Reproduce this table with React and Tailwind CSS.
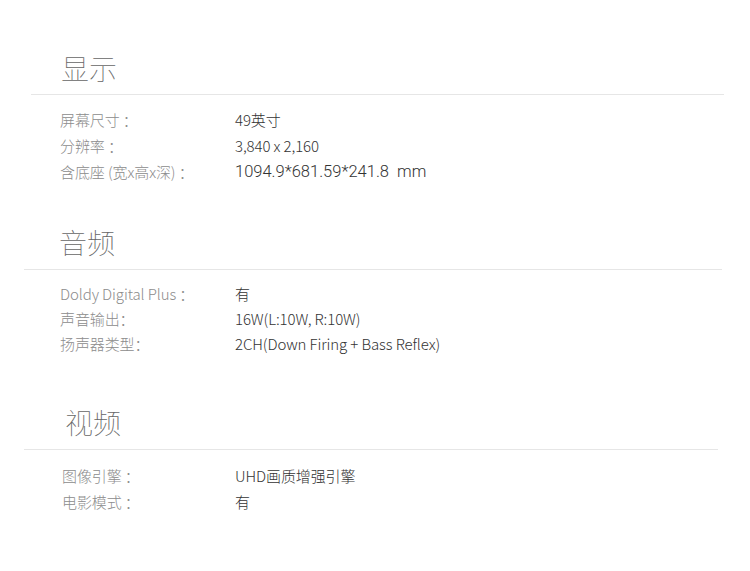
export default function App() {
  const cjk = { fontFamily: '"Noto Sans CJK SC", "Noto Sans", sans-serif' };
  const Row = ({ label, value, h, valueClass = "", labelClass = "w-[175px]" }) => (
    <div className={`flex items-center ${h}`}>
      <div className={`shrink-0 whitespace-pre text-[15px] font-light text-[#8c8c8c] tracking-[-0.1px] ${labelClass}`}>{label}</div>
      <div className={`whitespace-pre text-[15px] font-light text-[#333] tracking-[-0.1px] ${valueClass}`}>{value}</div>
    </div>
  );
  const heading = "h-[40px] text-[28px] leading-[40px] font-thin text-[#666]";
  return (
    <div className="w-[750px] h-[571px] bg-white overflow-hidden" style={cjk}>
      {/* 显示 */}
      <div className={`mt-[48px] pl-[61px] ${heading}`}>显示</div>
      <div className="mt-[6px] ml-[31px] w-[693px] h-px bg-[#e6e6e6]" />
      <div className="mt-[12px] pl-[60px]">
        <Row h="h-[26px]" label="屏幕尺寸 ：" value="49英寸" />
        <Row h="h-[26px]" label="分辨率 ：" value="3,840 x 2,160" />
        <Row
          h="h-[26px]"
          label="含底座 (宽x高x深) ："
          value="1094.9*681.59*241.8  mm"
          valueClass="text-[16.5px] font-light tracking-[0px] text-[#222] [font-family:Roboto,'Liberation_Sans',Arial,sans-serif]"
        />
      </div>

      {/* 音频 */}
      <div className={`mt-[37px] pl-[59px] ${heading}`}>音频</div>
      <div className="mt-[7px] ml-[24px] w-[698px] h-px bg-[#e6e6e6]" />
      <div className="mt-[12px] pl-[60px]">
        <Row h="h-[25px]" label="Doldy Digital Plus ：" value="有" />
        <Row h="h-[25px]" label="声音输出：" value="16W(L:10W, R:10W)" />
        <Row h="h-[25px]" label="扬声器类型：" value="2CH(Down Firing + Bass Reflex)" />
      </div>

      {/* 视频 */}
      <div className={`mt-[45px] pl-[65px] ${heading}`}>视频</div>
      <div className="mt-[7px] ml-[24px] w-[694px] h-px bg-[#e6e6e6]" />
      <div className="mt-[13px] pl-[62px]">
        <Row h="h-[26px]" label="图像引擎 ：" value="UHD画质增强引擎" labelClass="w-[173px]" />
        <Row h="h-[26px]" label="电影模式 ：" value="有" labelClass="w-[173px]" />
      </div>
    </div>
  );
}
